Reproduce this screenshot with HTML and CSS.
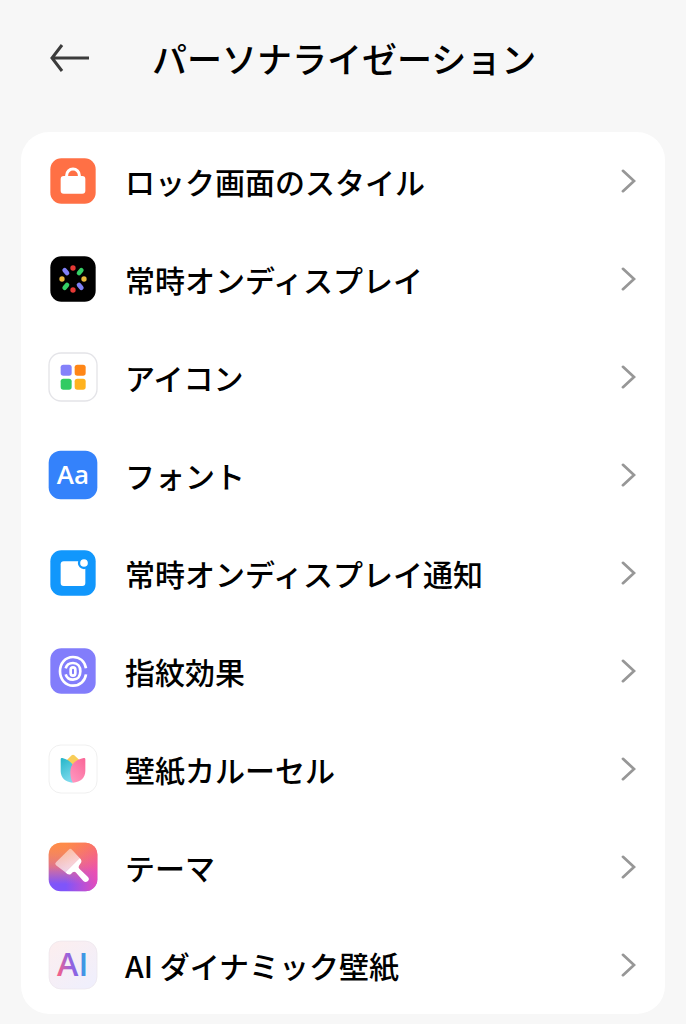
FILE: index.html
```html
<!DOCTYPE html>
<html lang="ja">

<head>
    <meta charset="UTF-8">
    <meta name="viewport" content="width=device-width, initial-scale=1.0">
    <title>パーソナライゼーション</title>
    <link rel="stylesheet" href="styles.css">
</head>

<body>

    <header class="header">
        <button type="button" class="back-button" aria-label="戻る">
            <svg width="40" height="30" viewBox="0 0 40 30">
                <path d="M12 2L2 15L12 28M2 15H39" />
            </svg>
        </button>
        <h1>パーソナライゼーション</h1>
    </header>

    <main class="menu">
        <!-- Ícone do cadeado -->
        <a class="menu-item" href="#">
            <svg class="icon" viewBox="0 0 150 150">
                <rect x="7" y="7" width="136" height="136" rx="33" fill="#ff7045" />
                <path d="M56 64V58a19 19 0 0 1 38 0V64" fill="none" stroke="#fff" stroke-width="9" />
                <rect x="38" y="60" width="74" height="53" rx="9" fill="#fff" />
            </svg>
            <span class="label">ロック画面のスタイル</span>
            <svg class="arrow" viewBox="0 0 16 26"><path d="M2 2L14 13L2 24" /></svg>
        </a>

        <a class="menu-item" href="#">
            <svg class="icon" viewBox="0 0 150 150">
                <rect x="7" y="7" width="136" height="136" rx="33" fill="#000" />
                <g fill="#e53935">
                    <circle cx="75" cy="42" r="8" />
                    <circle cx="75" cy="108" r="8" />
                </g>
                <g fill="#e9b73c">
                    <circle cx="42" cy="75" r="8" />
                    <circle cx="108" cy="75" r="8" />
                </g>
                <g stroke-width="14" stroke-linecap="round">
                    <path d="M50 49L57 57M93 93L100 101" stroke="#7f80f5" />
                    <path d="M100 49L93 57M57 93L50 101" stroke="#35cf65" />
                </g>
            </svg>
            <span class="label">常時オンディスプレイ</span>
            <svg class="arrow" viewBox="0 0 16 26"><path d="M2 2L14 13L2 24" /></svg>
        </a>

        <a class="menu-item" href="#">
            <svg class="icon" viewBox="0 0 150 150">
                <rect x="3" y="3" width="144" height="144" rx="36" fill="#fff" stroke="#e4e4e8" stroke-width="4" />
                <rect x="38" y="38" width="33" height="33" rx="8" fill="#8481fa" />
                <rect x="80" y="38" width="33" height="33" rx="8" fill="#ff8616" />
                <rect x="38" y="80" width="33" height="33" rx="8" fill="#32cb62" />
                <rect x="80" y="80" width="33" height="33" rx="8" fill="#ffb21e" />
            </svg>
            <span class="label">アイコン</span>
            <svg class="arrow" viewBox="0 0 16 26"><path d="M2 2L14 13L2 24" /></svg>
        </a>

        <a class="menu-item" href="#">
            <svg class="icon" viewBox="0 0 150 150">
                <rect x="2" y="2" width="146" height="146" rx="36" fill="#3482fb" />
                <text class="font-text" x="75" y="102" text-anchor="middle">Aa</text>
            </svg>
            <span class="label">フォント</span>
            <svg class="arrow" viewBox="0 0 16 26"><path d="M2 2L14 13L2 24" /></svg>
        </a>

        <a class="menu-item" href="#">
            <svg class="icon" viewBox="0 0 150 150">
                <rect x="7" y="7" width="136" height="136" rx="33" fill="#1197fc" />
                <rect x="38" y="40" width="74" height="74" rx="9" fill="#fff" />
                <circle cx="108" cy="45" r="15" fill="#fff" stroke="#1197fc" stroke-width="7" />
            </svg>
            <span class="label">常時オンディスプレイ通知</span>
            <svg class="arrow" viewBox="0 0 16 26"><path d="M2 2L14 13L2 24" /></svg>
        </a>

        <!-- Ícone da impressão digital -->
        <a class="menu-item" href="#">
            <svg class="icon" viewBox="0 0 150 150">
                <rect x="7" y="7" width="136" height="136" rx="33" fill="#827dfb" />
                <g fill="none" stroke="#fff" stroke-width="8">
                    <path d="M114 67C110 46 95 33 75 33C52 33 36 52 36 76C36 101 53 119 75 119C96 119 111 105 114 85" />
                    <path d="M53 67C56 56 64 51 75 51C89 51 97 61 97 76C97 91 89 101 75 101C64 101 56 95 53 85" />
                    <rect x="68" y="64" width="14" height="25" rx="7" />
                </g>
            </svg>
            <span class="label">指紋効果</span>
            <svg class="arrow" viewBox="0 0 16 26"><path d="M2 2L14 13L2 24" /></svg>
        </a>

        <a class="menu-item" href="#">
            <svg class="icon" viewBox="0 0 150 150">
                <defs>
                    <linearGradient id="teal" x1="0" y1="0" x2="0.4" y2="1">
                        <stop offset="0" stop-color="#22b5c8" />
                        <stop offset="1" stop-color="#7bd9ec" />
                    </linearGradient>
                    <linearGradient id="pink" x1="1" y1="0" x2="0.3" y2="1">
                        <stop offset="0" stop-color="#fa6596" />
                        <stop offset="1" stop-color="#ff94bd" />
                    </linearGradient>
                </defs>
                <rect x="3" y="3" width="144" height="144" rx="36" fill="#fff" stroke="#f0f0f0" stroke-width="3" />
                <path d="M53 52L71 34Q75 30 79 34L98 52L76 72Z" fill="#f8cd58" />
                <path d="M38 46Q38 41 43 42C62 47 76 58 80 76L74 116C52 114 38 101 38 80Z" fill="url(#teal)" />
                <path d="M112 46Q112 41 107 42C80 48 66 63 67 86C67 99 70 109 75 116C98 114 112 101 112 80Z" fill="url(#pink)" />
            </svg>
            <span class="label">壁紙カルーセル</span>
            <svg class="arrow" viewBox="0 0 16 26"><path d="M2 2L14 13L2 24" /></svg>
        </a>

        <!-- Ícone do pincel -->
        <a class="menu-item" href="#">
            <svg class="icon" viewBox="0 0 150 150">
                <defs>
                    <linearGradient id="theme" x1="0.3" y1="0" x2="0.3" y2="1">
                        <stop offset="0" stop-color="#ffa04c" />
                        <stop offset="0.5" stop-color="#d97098" />
                        <stop offset="0.85" stop-color="#7f55fa" />
                    </linearGradient>
                    <linearGradient id="side" x1="0" y1="0" x2="1" y2="0">
                        <stop offset="0.35" stop-color="#f04cb4" stop-opacity="0" />
                        <stop offset="1" stop-color="#f04cb4" stop-opacity="0.9" />
                    </linearGradient>
                    <linearGradient id="corner" x1="0.6" y1="0" x2="0.6" y2="0.6">
                        <stop offset="0" stop-color="#ff8145" />
                        <stop offset="1" stop-color="#ff8145" stop-opacity="0" />
                    </linearGradient>
                    <linearGradient id="brush" x1="0.2" y1="0" x2="0.8" y2="1">
                        <stop offset="0" stop-color="#fff" stop-opacity="0.4" />
                        <stop offset="1" stop-color="#fff" stop-opacity="0.8" />
                    </linearGradient>
                </defs>
                <rect x="2" y="2" width="146" height="146" rx="36" fill="url(#theme)" />
                <rect x="2" y="2" width="146" height="146" rx="36" fill="url(#side)" />
                <rect x="2" y="2" width="146" height="146" rx="36" fill="url(#corner)" opacity="0.7" />
                <path d="M24 61L62 23Q67 18 72 23L95 48L52 91L24 70Q19 66 24 61Z" fill="url(#brush)" />
                <path d="M95 48Q104 56 98 64L93 71Q90 76 94 80L120 105Q126 112 119 118Q112 123 106 117L83 91Q79 87 74 91L69 96Q61 101 52 91Z" fill="#fff" />
            </svg>
            <span class="label">テーマ</span>
            <svg class="arrow" viewBox="0 0 16 26"><path d="M2 2L14 13L2 24" /></svg>
        </a>

        <a class="menu-item" href="#">
            <svg class="icon" viewBox="0 0 150 150">
                <defs>
                    <linearGradient id="aiBack" x1="0" y1="0" x2="0.7" y2="1">
                        <stop offset="0" stop-color="#fdeeee" />
                        <stop offset="1" stop-color="#f0effc" />
                    </linearGradient>
                    <linearGradient id="aiText" gradientUnits="userSpaceOnUse" x1="30" y1="90" x2="112" y2="70">
                        <stop offset="0" stop-color="#f2608c" />
                        <stop offset="0.45" stop-color="#9b63dc" />
                        <stop offset="0.7" stop-color="#7b66ea" />
                        <stop offset="0.85" stop-color="#3f97e4" />
                    </linearGradient>
                </defs>
                <rect x="3" y="3" width="144" height="144" rx="36" fill="url(#aiBack)" stroke="#ebe6ec" stroke-width="2" />
                <text class="ai-text" x="74" y="108" text-anchor="middle" fill="url(#aiText)">AI</text>
            </svg>
            <span class="label">AI ダイナミック壁紙</span>
            <svg class="arrow" viewBox="0 0 16 26"><path d="M2 2L14 13L2 24" /></svg>
        </a>
    </main>

</body>

</html>
```

FILE: styles.css
```css
/* RESET BÁSICO */
* {
    margin: 0;
    padding: 0;
    box-sizing: border-box;
}

body {
    font-family: 'Noto Sans CJK JP', sans-serif;
    background-color: #f7f7f7;
    color: #000;
    padding-bottom: 10px;
}

/* CABEÇALHO */
.header {
    display: flex;
    align-items: center;
    gap: 62px;
    padding: 32px 50px 48px;
}

.header h1 {
    font-size: 35px;
    font-weight: 500;
    line-height: 52px;
}

.back-button {
    display: flex;
    border: none;
    background: none;
    cursor: pointer;
}

.back-button path {
    fill: none;
    stroke: #3c3c3c;
    stroke-width: 3;
}

/* LISTA DE OPÇÕES */
.menu {
    margin: 0 21px;
    background-color: #fff;
    border-radius: 28px;
    overflow: hidden;
}

.menu-item {
    display: flex;
    align-items: center;
    gap: 27px;
    height: 98px;
    padding: 0 29px 0 27px;
    color: #000;
    text-decoration: none;
}

.menu-item:active {
    background-color: #f2f2f2;
}

.icon {
    width: 50px;
    height: 50px;
    flex-shrink: 0;
}

.label {
    flex: 1;
    font-size: 30px;
    font-weight: 500;
    line-height: 44px;
}

.arrow {
    width: 15px;
    height: 24px;
    flex-shrink: 0;
}

.arrow path {
    fill: none;
    stroke: #979797;
    stroke-width: 3;
    stroke-linecap: round;
}

/* TEXTO DENTRO DOS ÍCONES */
.font-text {
    font-family: 'Open Sans', sans-serif;
    font-size: 78px;
    font-weight: 600;
    fill: #fff;
}

.ai-text {
    font-family: 'Open Sans', sans-serif;
    font-size: 97px;
    font-weight: 600;
}
```
